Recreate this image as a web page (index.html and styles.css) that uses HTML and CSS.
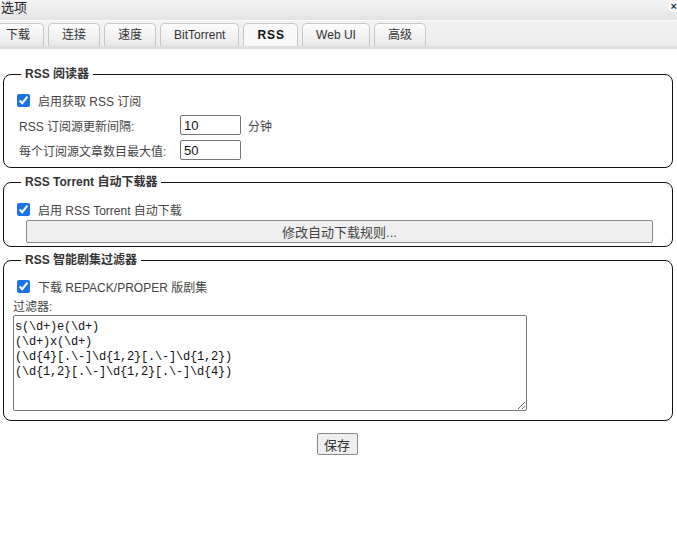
FILE: index.html
```html
<!DOCTYPE html>
<html lang="zh-CN">
<head>
    <meta charset="UTF-8">
    <title>选项</title>
    <link rel="stylesheet" href="styles.css">
</head>
<body>
    <div class="titlebar">
        <span class="title">选项</span>
        <span class="close">×</span>
    </div>

    <div class="tabs">
        <div class="tab">下载</div>
        <div class="tab">连接</div>
        <div class="tab">速度</div>
        <div class="tab">BitTorrent</div>
        <div class="tab active">RSS</div>
        <div class="tab">Web UI</div>
        <div class="tab">高级</div>
    </div>

    <div class="content">
        <fieldset class="group">
            <legend>RSS 阅读器</legend>
            <label class="check-row">
                <input type="checkbox" checked>
                <span>启用获取 RSS 订阅</span>
            </label>
            <div class="field-row">
                <span class="field-label">RSS 订阅源更新间隔:</span>
                <input class="num" type="text" value="10">
                <span class="unit">分钟</span>
            </div>
            <div class="field-row">
                <span class="field-label">每个订阅源文章数目最大值:</span>
                <input class="num" type="text" value="50">
            </div>
        </fieldset>

        <fieldset class="group group-tight">
            <legend>RSS Torrent 自动下载器</legend>
            <label class="check-row">
                <input type="checkbox" checked>
                <span>启用 RSS Torrent 自动下载</span>
            </label>
            <button class="wide-btn">修改自动下载规则...</button>
        </fieldset>

        <fieldset class="group">
            <legend>RSS 智能剧集过滤器</legend>
            <label class="check-row">
                <input type="checkbox" checked>
                <span>下载 REPACK/PROPER 版剧集</span>
            </label>
            <div class="filter-label">过滤器:</div>
            <textarea class="filters">s(\d+)e(\d+)
(\d+)x(\d+)
(\d{4}[.\-]\d{1,2}[.\-]\d{1,2})
(\d{1,2}[.\-]\d{1,2}[.\-]\d{4})</textarea>
        </fieldset>

        <div class="actions">
            <button class="save-btn">保存</button>
        </div>
    </div>
</body>
</html>
```

FILE: styles.css
```css
* {
    box-sizing: border-box;
}

body {
    margin: 0;
    font-family: "Liberation Sans", "Noto Sans CJK SC", sans-serif;
    font-size: 12px;
    color: #444;
    background: white;
    overflow: hidden;
}

.titlebar {
    height: 21px;
    display: flex;
    justify-content: space-between;
    align-items: flex-start;
    background: linear-gradient(#f4f4f4, #e3e3e3);
    border-bottom: 1px solid #fafafa;
}

.title {
    font-size: 13px;
    line-height: 16px;
    color: #222;
    padding-left: 1px;
}

.close {
    width: 9px;
    height: 11px;
    margin-top: 1px;
    border-radius: 5px 0 0 5px;
    background: white;
    color: #333;
    font-size: 11px;
    font-weight: bold;
    line-height: 10px;
    text-align: right;
}

.tabs {
    height: 28px;
    display: flex;
    align-items: flex-end;
    gap: 4px;
    margin-left: -8px;
    background: linear-gradient(#f2f2f2, #ededed);
    border-bottom: 3px solid #dedede;
}

.tab {
    height: 23px;
    padding: 0 13px;
    line-height: 22px;
    font-size: 12px;
    color: #333;
    background: linear-gradient(#fdfdfd, #e8e8e8);
    border: 1px solid #c6c6c6;
    border-bottom: none;
    border-radius: 5px 5px 0 0;
}

.tab.active {
    background: #f9f9f9;
    color: #111;
    font-weight: bold;
    letter-spacing: 1px;
    padding: 0 12px 0 13px;
}

.content {
    padding: 18px 4px 0 3px;
}

.group {
    margin: 0 0 7px 0;
    padding: 10px 9px 7px 9px;
    border: 1px solid #111;
    border-radius: 8px;
    min-width: 0;
}

.group-tight {
    padding-top: 11px;
    padding-bottom: 3px;
    margin-bottom: 6px;
}

.group legend {
    margin-left: 8px;
    padding: 0 4px;
    font-weight: bold;
    font-size: 12px;
    line-height: 14px;
    color: #333;
}

.check-row {
    display: flex;
    align-items: center;
    height: 19px;
}

.check-row input {
    width: 13px;
    height: 13px;
    margin: 3px 8px 3px 4px;
    accent-color: #1a73e8;
}

.field-row {
    display: flex;
    align-items: center;
    margin-top: 5px;
}

.field-label {
    width: 167px;
    padding-left: 6px;
}

.num {
    width: 61px;
    height: 20px;
    padding: 0 3px;
    border: 1px solid #767676;
    border-radius: 2px;
    font-family: "Liberation Sans", sans-serif;
    font-size: 13px;
    color: #111;
}

.unit {
    margin-left: 7px;
}

.wide-btn {
    display: block;
    width: 627px;
    height: 23px;
    margin: 1px 0 0 13px;
    background: #efefef;
    border: 1px solid #8a8a8a;
    border-radius: 2px;
    font-family: "Liberation Sans", "Noto Sans CJK SC", sans-serif;
    font-size: 13px;
    color: #444;
}

.filter-label {
    line-height: 14px;
    margin: 4px 0 1px 0;
}

.filters {
    display: block;
    width: 514px;
    height: 96px;
    margin: 0 0 2px 0;
    padding: 4px 1px 2px 1px;
    border: 1px solid #767676;
    border-radius: 2px;
    font-family: "Liberation Mono", "Noto Sans CJK SC", monospace;
    font-size: 12px;
    letter-spacing: -0.2px;
    line-height: 15px;
    color: #111;
    resize: both;
}

.actions {
    display: flex;
    justify-content: center;
    padding-top: 5px;
    padding-right: 2px;
}

.save-btn {
    width: 41px;
    height: 22px;
    padding: 0;
    background: #efefef;
    border: 1px solid #8a8a8a;
    border-radius: 2px;
    font-family: "Liberation Sans", "Noto Sans CJK SC", sans-serif;
    font-size: 13px;
    color: #333;
}
```
